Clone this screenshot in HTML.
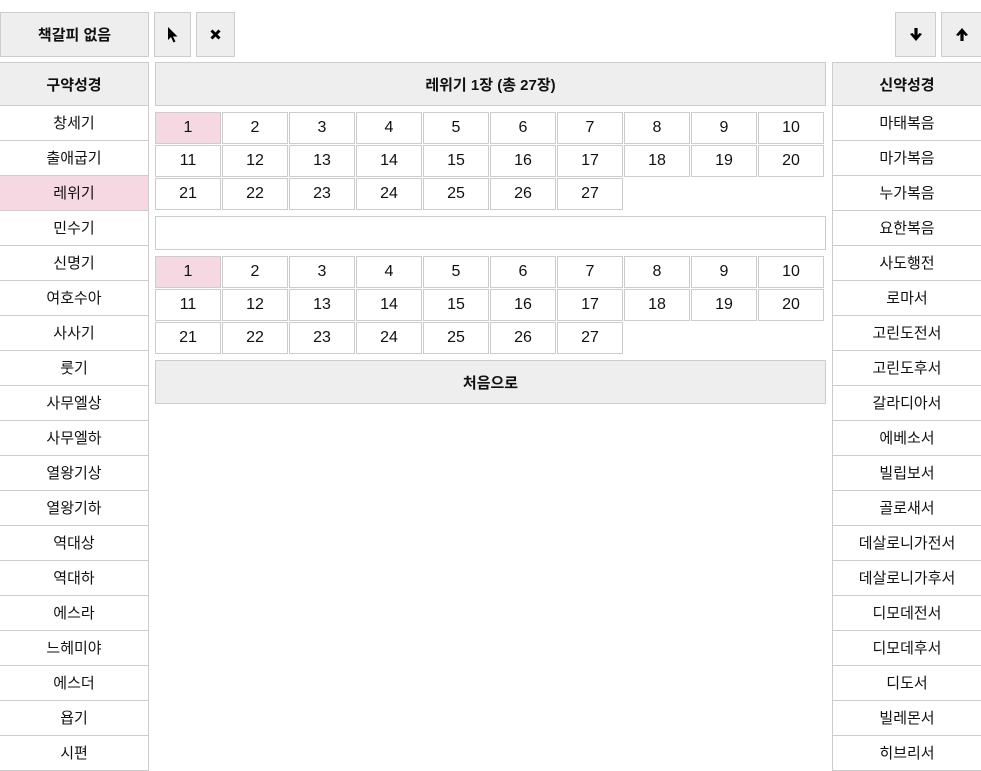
<!DOCTYPE html>
<html><head><meta charset="utf-8"><style>
*{box-sizing:border-box;margin:0;padding:0}
body{width:981px;height:756px;overflow:hidden;background:#fff;font-family:"Liberation Sans","Noto Sans CJK KR",sans-serif;font-size:15px;color:#111;position:relative}
.a{position:absolute}
.btn{position:absolute;background:#eee;border:1px solid #ccc;display:flex;align-items:center;justify-content:center;font-weight:bold}
.col{position:absolute;top:62px;width:150px}
.col .h{height:44px;background:#eee;border:1px solid #ccc;display:flex;align-items:center;justify-content:center;font-weight:bold}
.col .r{height:35px;border-bottom:1px solid #ccc;border-right:1px solid #ccc;border-left:1px solid #ccc;display:flex;align-items:center;justify-content:center;padding-bottom:2px}
.sel{background:#f6d8e3}
.grid{position:absolute;left:155px;width:672px;display:flex;flex-wrap:wrap;gap:1px}
.grid div{width:66px;height:32px;border:1px solid #ccc;display:flex;align-items:center;justify-content:center;font-size:16px}
</style></head><body>
<div class="btn" style="left:0;top:12px;width:149px;height:45px">책갈피 없음</div>
<div class="btn" style="left:154px;top:12px;width:37px;height:45px"><svg width="12" height="16" viewBox="0 0 12 16"><path d="M1 0 L1 13 L4 10 L6.5 15.5 L8.5 14.5 L6 9.5 L10.5 9.5 Z" fill="#000"/></svg></div>
<div class="btn" style="left:196px;top:12px;width:39px;height:45px"><svg width="11" height="11" viewBox="0 0 11 11"><path d="M1.5 1.5 L9.5 9.5 M9.5 1.5 L1.5 9.5" stroke="#000" stroke-width="3"/></svg></div>
<div class="btn" style="left:895px;top:12px;width:41px;height:45px"><svg width="14" height="15" viewBox="0 0 14 15"><path d="M7 1 V10" stroke="#000" stroke-width="3.2"/><path d="M1 7 L7 14 L13 7 L10.5 6 L7 10 L3.5 6 Z" fill="#000"/></svg></div>
<div class="btn" style="left:941px;top:12px;width:41px;height:45px"><svg width="14" height="15" viewBox="0 0 14 15"><path d="M7 14 V5" stroke="#000" stroke-width="3.2"/><path d="M1 8 L7 1 L13 8 L10.5 9 L7 5 L3.5 9 Z" fill="#000"/></svg></div>

<div class="col" style="left:-1px"><div class="h">구약성경</div>
<div class="r">창세기</div><div class="r">출애굽기</div><div class="r sel">레위기</div><div class="r">민수기</div><div class="r">신명기</div><div class="r">여호수아</div><div class="r">사사기</div><div class="r">룻기</div><div class="r">사무엘상</div><div class="r">사무엘하</div><div class="r">열왕기상</div><div class="r">열왕기하</div><div class="r">역대상</div><div class="r">역대하</div><div class="r">에스라</div><div class="r">느헤미야</div><div class="r">에스더</div><div class="r">욥기</div><div class="r">시편</div></div>

<div class="col" style="left:832px"><div class="h">신약성경</div>
<div class="r">마태복음</div><div class="r">마가복음</div><div class="r">누가복음</div><div class="r">요한복음</div><div class="r">사도행전</div><div class="r">로마서</div><div class="r">고린도전서</div><div class="r">고린도후서</div><div class="r">갈라디아서</div><div class="r">에베소서</div><div class="r">빌립보서</div><div class="r">골로새서</div><div class="r">데살로니가전서</div><div class="r">데살로니가후서</div><div class="r">디모데전서</div><div class="r">디모데후서</div><div class="r">디도서</div><div class="r">빌레몬서</div><div class="r">히브리서</div></div>

<div class="btn" style="left:155px;top:62px;width:671px;height:44px">레위기 1장 (총 27장)</div>
<div class="grid" style="top:112px">
<div class="sel">1</div><div>2</div><div>3</div><div>4</div><div>5</div><div>6</div><div>7</div><div>8</div><div>9</div><div>10</div><div>11</div><div>12</div><div>13</div><div>14</div><div>15</div><div>16</div><div>17</div><div>18</div><div>19</div><div>20</div><div>21</div><div>22</div><div>23</div><div>24</div><div>25</div><div>26</div><div>27</div></div>
<div class="a" style="left:155px;top:216px;width:671px;height:34px;border:1px solid #ccc"></div>
<div class="grid" style="top:256px">
<div class="sel">1</div><div>2</div><div>3</div><div>4</div><div>5</div><div>6</div><div>7</div><div>8</div><div>9</div><div>10</div><div>11</div><div>12</div><div>13</div><div>14</div><div>15</div><div>16</div><div>17</div><div>18</div><div>19</div><div>20</div><div>21</div><div>22</div><div>23</div><div>24</div><div>25</div><div>26</div><div>27</div></div>
<div class="btn" style="left:155px;top:360px;width:671px;height:44px">처음으로</div>
</body></html>
